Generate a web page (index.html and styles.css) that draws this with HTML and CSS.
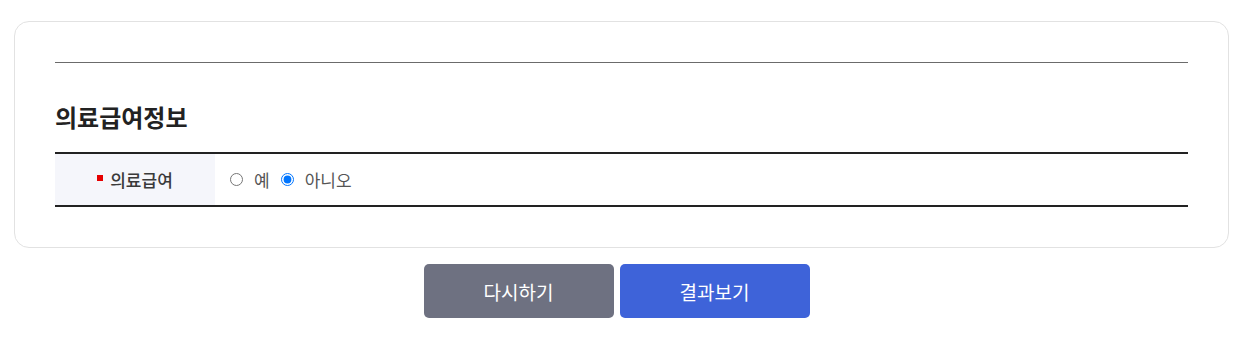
FILE: index.html
```html
<!DOCTYPE html>
<html lang="ko">
<head>
<meta charset="utf-8">
<link rel="stylesheet" href="styles.css">
</head>
<body>
<div class="page">
  <section class="card">
    <hr class="top-line">
    <h2 class="title">의료급여정보</h2>
    <div class="form-table">
      <div class="row">
        <div class="label"><span class="req"></span>의료급여</div>
        <div class="value">
          <label class="opt"><input type="radio" name="med" value="y"><span>예</span></label>
          <label class="opt"><input type="radio" name="med" value="n" checked><span>아니오</span></label>
        </div>
      </div>
    </div>
  </section>
  <div class="actions">
    <button class="btn btn-reset" type="button">다시하기</button>
    <button class="btn btn-result" type="button">결과보기</button>
  </div>
</div>
</body>
</html>
```
FILE: styles.css
```css
* { box-sizing: border-box; }
html, body { margin: 0; padding: 0; background: #fff; }
body {
  font-family: "Noto Sans CJK KR", "Noto Sans", sans-serif;
  color: #222;
}
.page {
  padding: 21px 16px 0 14px;
}
.card {
  border: 1px solid #e2e2e2;
  border-radius: 15px;
  padding: 40px 40px 40px 40px;
  background: #fff;
}
.top-line {
  margin: 0;
  border: 0;
  border-top: 1px solid #6b6b6b;
  height: 0;
}
.title {
  margin: 39px 0 20px;
  font-size: 24px;
  line-height: 30px;
  font-weight: 700;
  color: #222;
}
.form-table {
  border-top: 2px solid #222;
  border-bottom: 2px solid #222;
}
.row {
  display: flex;
  height: 51px;
}
.label {
  width: 160px;
  background: #f5f6fb;
  display: flex;
  align-items: center;
  justify-content: center;
  font-size: 17px;
  font-weight: 500;
  color: #3a3a3a;
  gap: 7px;
}
.req {
  width: 6px;
  height: 6px;
  background: #e60000;
  margin-top: -3px;
}
.value {
  display: flex;
  align-items: center;
  padding-left: 15px;
  font-size: 17px;
  color: #555;
  gap: 11px;
}
.opt {
  display: flex;
  align-items: center;
  gap: 11px;
}
.opt input {
  margin: 0;
  width: 13px;
  height: 13px;
}
.actions {
  display: flex;
  justify-content: center;
  gap: 6px;
  margin-top: 16px;
  padding-right: 10px;
}
.btn {
  width: 190px;
  height: 54px;
  border: 0;
  border-radius: 5px;
  color: #fff;
  font-family: "Noto Sans CJK KR", "Noto Sans", sans-serif;
  font-size: 19px;
  cursor: pointer;
}
.btn-reset { background: #6e7181; }
.btn-result { background: #3e63d9; }
```
